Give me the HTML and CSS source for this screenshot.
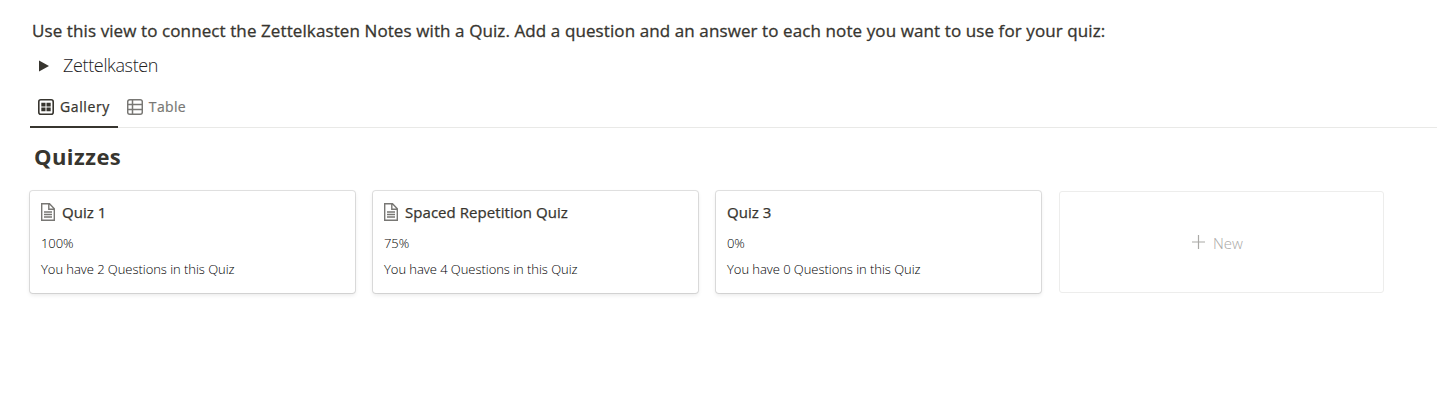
FILE: index.html
```html
<!DOCTYPE html>
<html lang="en">
<head>
    <meta charset="UTF-8">
    <meta name="viewport" content="width=device-width, initial-scale=1.0">
    <title>Quizzes</title>
    <link rel="stylesheet" href="styles.css">
</head>
<body>
    <p class="intro"><span>Use this view to connect the Zettelkasten Notes with a Quiz. Add a question and an answer to each note you want to use for your quiz:</span></p>
    <div class="toggle">
        <svg class="arrow" width="10" height="12" viewBox="0 0 10 12"><path d="M0 0.5L10 6L0 11.5Z" fill="#37352f"/></svg>
        <span>Zettelkasten</span>
    </div>
    <div class="tabs">
        <div class="tab active">
            <svg width="16" height="16" viewBox="0 0 16 16"><rect x="0.8" y="0.8" width="14.4" height="14.4" rx="2" fill="none" stroke="currentColor" stroke-width="1.6"/><path d="M3.3 3.8h4.2v3.7h-4.2zM8.5 3.8h4.2v3.7h-4.2zM3.3 8.5h4.2v3.7h-4.2zM8.5 8.5h4.2v3.7h-4.2z" fill="currentColor"/></svg>
            <span>Gallery</span>
        </div>
        <div class="tab">
            <svg width="16" height="16" viewBox="0 0 16 16"><path d="M2.7 0.8h10.6a2 2 0 0 1 2 2v10.4a2 2 0 0 1-2 2H2.7a2 2 0 0 1-2-2V2.8a2 2 0 0 1 2-2zM5.5 1v14M1 5.5h14M1 10.5h14" fill="none" stroke="currentColor" stroke-width="1.5"/></svg>
            <span>Table</span>
        </div>
    </div>
    <h2 class="title"><span>Quizzes</span></h2>
    <div class="gallery">
        <div class="card">
            <div class="card-title">
                <svg class="page" width="14" height="18" viewBox="0 0 14 18"><path d="M0.7 0.7h7.8L13.3 5.7V17.3H0.7zM7.8 1v5.2h5.2M3 9h8M3 11.5h8M3 14h8" fill="none" stroke="currentColor" stroke-width="1.4"/></svg>
                <span>Quiz 1</span>
            </div>
            <div class="card-text"><span>100%</span></div>
            <div class="card-text"><span>You have 2 Questions in this Quiz</span></div>
        </div>
        <div class="card">
            <div class="card-title">
                <svg class="page" width="14" height="18" viewBox="0 0 14 18"><path d="M0.7 0.7h7.8L13.3 5.7V17.3H0.7zM7.8 1v5.2h5.2M3 9h8M3 11.5h8M3 14h8" fill="none" stroke="currentColor" stroke-width="1.4"/></svg>
                <span>Spaced Repetition Quiz</span>
            </div>
            <div class="card-text"><span>75%</span></div>
            <div class="card-text"><span>You have 4 Questions in this Quiz</span></div>
        </div>
        <div class="card">
            <div class="card-title"><span>Quiz 3</span></div>
            <div class="card-text"><span>0%</span></div>
            <div class="card-text"><span>You have 0 Questions in this Quiz</span></div>
        </div>
        <div class="card-new">
            <svg width="13" height="14" viewBox="0 0 13 14"><path d="M6.5 0v14M0 7h13" fill="none" stroke="currentColor" stroke-width="1.2"/></svg>
            <span>New</span>
        </div>
    </div>
</body>
</html>
```
FILE: styles.css
```css
body {
    margin: 0;
    padding: 18px 0 0 30px;
    min-height: 100vh;
    box-sizing: border-box;
    background-color: #fff;
    color: #37352f;
    font-family: "Open Sans", "Noto Sans", sans-serif;
    white-space: nowrap;
}
svg {
    flex-shrink: 0;
}
.intro {
    margin: 0;
    padding-left: 2px;
    font-size: 17px;
    font-weight: 400;
    line-height: 26px;
    letter-spacing: 0.098px;
    -webkit-text-stroke: 0.3px #37352f;
}
.toggle {
    display: flex;
    align-items: center;
    height: 26px;
    margin-top: 9px;
    padding-left: 9px;
    font-size: 18px;
    font-weight: 300;
    line-height: 24px;
    letter-spacing: -0.36px;
    color: #22211e;
}
.toggle span {
    padding-bottom: 2px;
}
.arrow {
    margin-right: 14px;
}
.tabs {
    display: flex;
    height: 40px;
    margin-top: 8px;
    border-bottom: 1px solid #e9e9e7;
}
.tab {
    display: flex;
    align-items: center;
    gap: 6px;
    height: 39px;
    padding: 0 8px 0 9px;
    color: #787774;
    font-size: 14px;
    letter-spacing: 0.35px;
    -webkit-text-stroke: 0.2px currentColor;
}
.active {
    padding: 0 8px;
    border-bottom: 2px solid #37352f;
    color: #37352f;
    letter-spacing: 0.6px;
    -webkit-text-stroke: 0.25px currentColor;
}
.title {
    margin: 12px 0 0 4px;
    font-size: 22px;
    font-weight: 700;
    line-height: 32px;
    letter-spacing: 0.45px;
}
.gallery {
    display: grid;
    grid-template-columns: repeat(4, 325px);
    gap: 18px;
    margin-top: 19px;
}
.card {
    height: 102px;
    box-sizing: border-box;
    padding: 9px 11px;
    border-radius: 3px;
    box-shadow: 0 0 0 1px rgba(15, 15, 15, 0.12), 0 2px 4px rgba(15, 15, 15, 0.1);
}
.card-title {
    display: flex;
    align-items: center;
    gap: 7px;
    height: 23px;
    font-size: 15px;
    letter-spacing: 0.05px;
    -webkit-text-stroke: 0.25px currentColor;
}
.page {
    color: #787774;
}
.card-text {
    height: 26px;
    font-size: 13px;
    font-weight: 300;
    line-height: 26px;
    letter-spacing: -0.05px;
    color: #000;
}
.card-title + .card-text {
    margin-top: 7px;
}
.card-new {
    display: flex;
    align-items: center;
    justify-content: center;
    gap: 8px;
    height: 102px;
    box-sizing: border-box;
    padding: 0 8px 0 0;
    border: 1px solid #ededec;
    border-radius: 3px;
    color: #aaa9a6;
    font-size: 15px;
    font-weight: 300;
}
.card-new span {
    padding-top: 2px;
}
```
